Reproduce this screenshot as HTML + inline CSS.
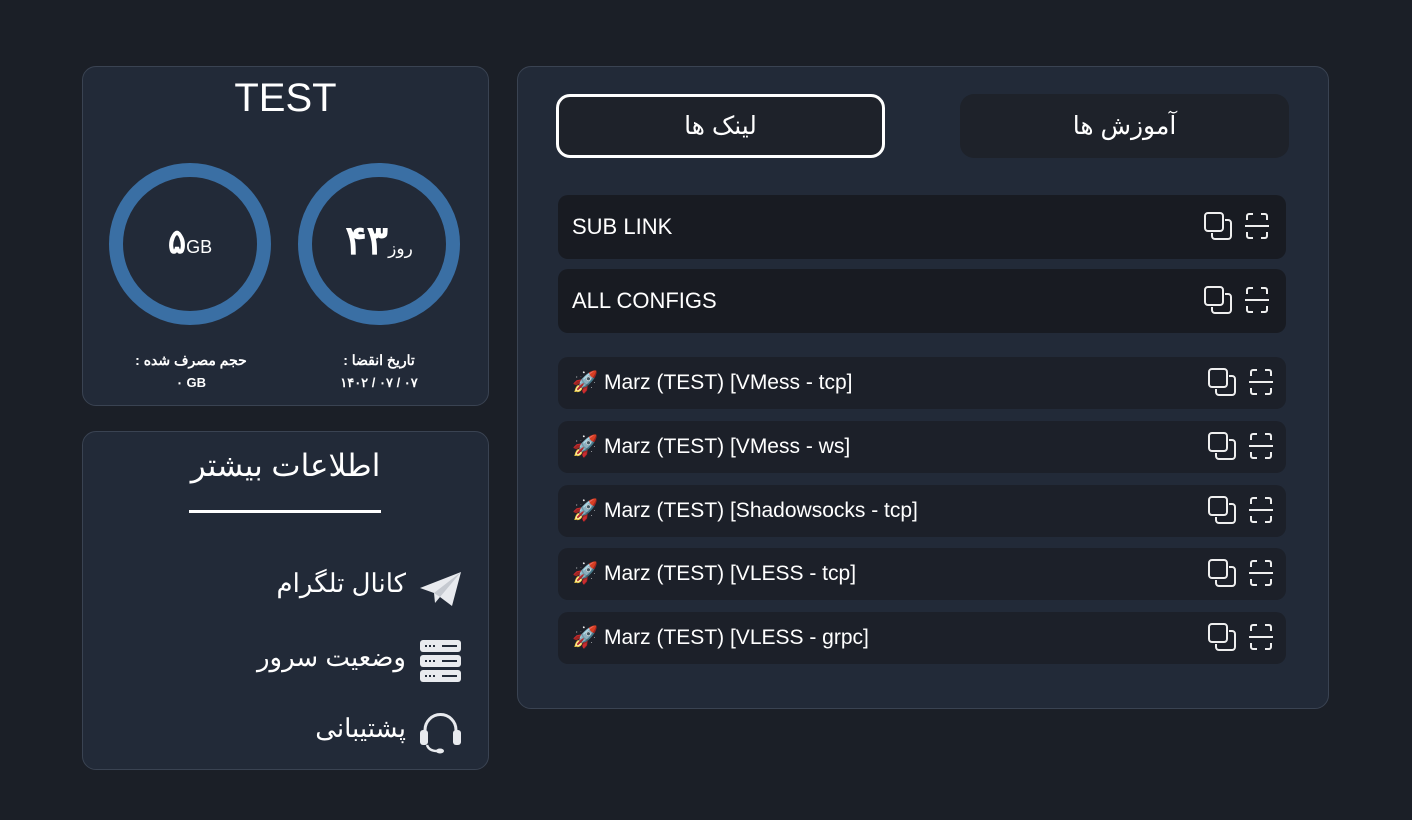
<!DOCTYPE html>
<html><head><meta charset="utf-8"><style>
*{box-sizing:border-box;margin:0;padding:0}
body{width:1412px;height:820px;background:#1b1f27;font-family:"Liberation Sans","Noto Sans CJK SC",sans-serif;color:#fff;position:relative;overflow:hidden}
.card{position:absolute;background:#222a38;border:1px solid #3a4352;border-radius:14px}
.abs{position:absolute}
.ring{position:absolute;width:162px;height:162px;border-radius:50%;border:14px solid #3a6fa4}
.tab{position:absolute;top:94px;height:64px;border-radius:14px;background:#1e222a;font-size:25px;display:flex;align-items:center;justify-content:center}
.row{position:absolute;left:558px;width:728px;border-radius:10px;display:flex;align-items:center;padding-left:14px;font-size:22px}
.row.big{background:#181b22;height:64px}
.row.sm{background:#1c2029;height:52px;font-size:21px}
.ic{position:absolute;right:14px;top:50%;transform:translateY(-50%)}
.sm .ic{right:10px}
</style></head><body>
<div class="card" style="left:82px;top:66px;width:407px;height:340px"></div>
<div class="abs" style="left:82px;top:76px;width:407px;text-align:center;font-size:40px">TEST</div>
<div class="ring" style="left:109px;top:163px"></div>
<div class="ring" style="left:298px;top:163px"></div>
<div class="abs" style="left:109px;top:222px;width:162px;text-align:center;font-size:34px;font-weight:bold">۵<span style="font-size:18px;font-weight:normal">GB</span></div>
<div class="abs" style="left:298px;top:218px;width:162px;text-align:center;font-size:40px;font-weight:bold" dir="rtl"><span style="font-size:17px;font-weight:normal">روز</span>۴۳</div>
<div class="abs" dir="rtl" style="left:110px;top:352px;width:162px;text-align:center;font-size:14px;font-weight:bold">حجم مصرف شده :</div>
<div class="abs" style="left:110px;top:375px;width:162px;text-align:center;font-size:13px;font-weight:bold">۰ GB</div>
<div class="abs" dir="rtl" style="left:298px;top:352px;width:162px;text-align:center;font-size:14px;font-weight:bold">تاریخ انقضا :</div>
<div class="abs" style="left:298px;top:375px;width:162px;text-align:center;font-size:13px;font-weight:bold">۱۴۰۲ / ۰۷ / ۰۷</div>

<div class="card" style="left:82px;top:431px;width:407px;height:339px"></div>
<div class="abs" dir="rtl" style="left:82px;top:448px;width:407px;text-align:center;font-size:31px">اطلاعات بیشتر</div>
<div class="abs" style="left:189px;top:510px;width:192px;height:3px;background:#fff"></div>
<div class="abs" dir="rtl" style="right:1006px;top:568px;font-size:26px">کانال تلگرام</div>
<svg class="abs" style="left:419px;top:571px" width="43" height="36" viewBox="0 0 43 36"><path d="M1 17 L42 1 L33 35 L21 26 L16 32 L15 22 Z" fill="#e8eaee"/><path d="M15 22 L42 1 L21 26 Z" fill="#c5c9d0"/></svg>
<div class="abs" dir="rtl" style="right:1006px;top:642px;font-size:26px">وضعیت سرور</div>
<svg class="abs" style="left:420px;top:640px" width="41" height="42" viewBox="0 0 41 42"><g fill="#e8eaee"><rect x="0" y="0" width="41" height="12" rx="3"/><rect x="0" y="15" width="41" height="12" rx="3"/><rect x="0" y="30" width="41" height="12" rx="3"/></g><g fill="#222a38"><rect x="5" y="5" width="2" height="2"/><rect x="9" y="5" width="2" height="2"/><rect x="13" y="5" width="2" height="2"/><rect x="22" y="5" width="15" height="2"/><rect x="5" y="20" width="2" height="2"/><rect x="9" y="20" width="2" height="2"/><rect x="13" y="20" width="2" height="2"/><rect x="22" y="20" width="15" height="2"/><rect x="5" y="35" width="2" height="2"/><rect x="9" y="35" width="2" height="2"/><rect x="13" y="35" width="2" height="2"/><rect x="22" y="35" width="15" height="2"/></g></svg>
<div class="abs" dir="rtl" style="right:1006px;top:713px;font-size:26px">پشتیبانی</div>
<svg class="abs" style="left:419px;top:712px" width="43" height="42" viewBox="0 0 43 42"><path d="M6 22 V18 A15.5 15.5 0 0 1 37 18 V22" fill="none" stroke="#e8eaee" stroke-width="3"/><rect x="1" y="18" width="8" height="15" rx="3" fill="#e8eaee"/><rect x="34" y="18" width="8" height="15" rx="3" fill="#e8eaee"/><path d="M8 33 Q10 39 18 39" fill="none" stroke="#e8eaee" stroke-width="2.5"/><ellipse cx="21" cy="39" rx="4" ry="2.5" fill="#e8eaee"/></svg>

<div class="card" style="left:517px;top:66px;width:812px;height:643px"></div>
<div class="tab" dir="rtl" style="left:556px;width:329px;border:3px solid #fff">لینک ها</div>
<div class="tab" dir="rtl" style="left:960px;width:329px">آموزش ها</div>

<svg width="0" height="0" style="position:absolute"><defs>
<g id="icons"><rect x="1" y="1" width="18" height="18" rx="3" fill="none" stroke="#eee" stroke-width="2"/><path d="M21 8 h3 a3 3 0 0 1 3 3 v13 a3 3 0 0 1 -3 3 h-13 a3 3 0 0 1 -3 -3 v-3" fill="none" stroke="#eee" stroke-width="2"/>
<path d="M43 8 v-4 a2 2 0 0 1 2 -2 h4 M57 2 h4 a2 2 0 0 1 2 2 v4 M63 20 v4 a2 2 0 0 1 -2 2 h-4 M49 26 h-4 a2 2 0 0 1 -2 -2 v-4 M41 14 h24" fill="none" stroke="#eee" stroke-width="2"/></g></defs></svg>

<div class="row big" style="top:195px">SUB LINK<svg class="ic" width="68" height="30"><use href="#icons"/></svg></div>
<div class="row big" style="top:269px">ALL CONFIGS<svg class="ic" width="68" height="30"><use href="#icons"/></svg></div>
<div class="row sm" style="top:357px">🚀&nbsp;Marz (TEST) [VMess - tcp]<svg class="ic" width="68" height="30"><use href="#icons"/></svg></div>
<div class="row sm" style="top:421px">🚀&nbsp;Marz (TEST) [VMess - ws]<svg class="ic" width="68" height="30"><use href="#icons"/></svg></div>
<div class="row sm" style="top:485px">🚀&nbsp;Marz (TEST) [Shadowsocks - tcp]<svg class="ic" width="68" height="30"><use href="#icons"/></svg></div>
<div class="row sm" style="top:548px">🚀&nbsp;Marz (TEST) [VLESS - tcp]<svg class="ic" width="68" height="30"><use href="#icons"/></svg></div>
<div class="row sm" style="top:612px">🚀&nbsp;Marz (TEST) [VLESS - grpc]<svg class="ic" width="68" height="30"><use href="#icons"/></svg></div>
</body></html>
